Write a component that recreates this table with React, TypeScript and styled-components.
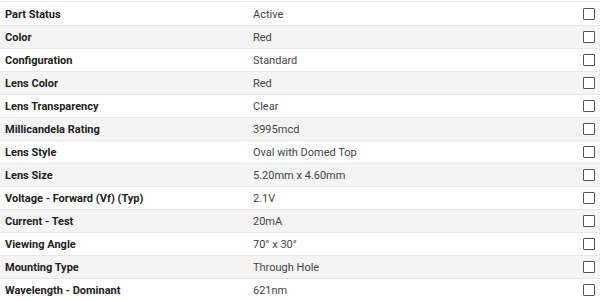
import styled, { createGlobalStyle } from 'styled-components';

const Global = createGlobalStyle`
  body {
    margin: 0;
    background: #fff;
    font-family: Roboto, "Liberation Sans", sans-serif;
  }
`;

const Table = styled.div`
  margin-top: 1px;
  padding-top: 1px;
  border-top: 1px solid #e6e6e6;
`;

const Row = styled.div<{ $alt: boolean }>`
  display: grid;
  grid-template-columns: 248px 1fr 17px;
  align-items: center;
  height: 22px;
  padding-left: 5px;
  border-bottom: 1px solid #e6e6e6;
  background: ${(p) => (p.$alt ? '#f4f4f4' : '#fff')};
`;

const Label = styled.div`
  font-size: 11px;
  font-weight: 700;
  color: #222;
`;

const Value = styled.div`
  font-size: 11px;
  color: #444;
`;

const Box = styled.span`
  width: 10px;
  height: 10px;
  border: 1px solid #555;
  border-radius: 1px;
  background: #fff;
`;

const rows: [string, string][] = [
  ['Part Status', 'Active'],
  ['Color', 'Red'],
  ['Configuration', 'Standard'],
  ['Lens Color', 'Red'],
  ['Lens Transparency', 'Clear'],
  ['Millicandela Rating', '3995mcd'],
  ['Lens Style', 'Oval with Domed Top'],
  ['Lens Size', '5.20mm x 4.60mm'],
  ['Voltage - Forward (Vf) (Typ)', '2.1V'],
  ['Current - Test', '20mA'],
  ['Viewing Angle', '70° x 30°'],
  ['Mounting Type', 'Through Hole'],
  ['Wavelength - Dominant', '621nm'],
];

export default function App() {
  return (
    <>
      <Global />
      <Table>
        {rows.map(([k, v], i) => (
          <Row key={k} $alt={i % 2 === 1}>
            <Label>{k}</Label>
            <Value>{v}</Value>
            <Box />
          </Row>
        ))}
      </Table>
    </>
  );
}
